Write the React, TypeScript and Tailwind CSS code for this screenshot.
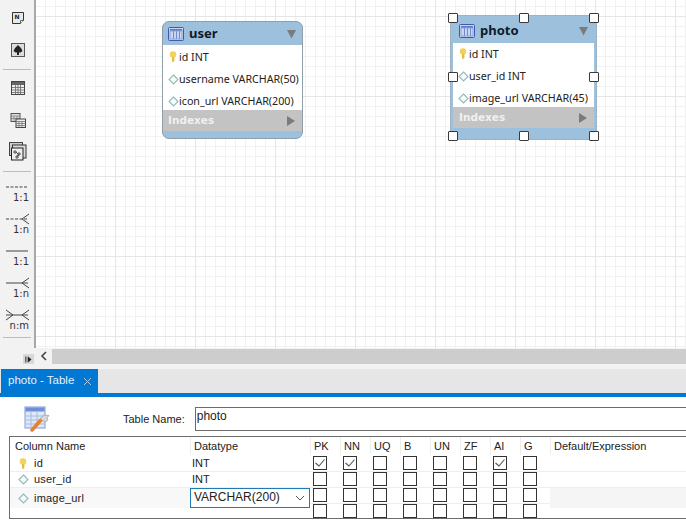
import React from "react";

const ui = { fontFamily: '"Liberation Sans", Arial, sans-serif' };
const node = { fontFamily: '"Noto Sans", "Open Sans", sans-serif' };
const erd = { fontFamily: '"DejaVu Sans", "Noto Sans", sans-serif' };

function TableGlyph() {
  return (
    <svg width="16" height="16" viewBox="0 0 16 16">
      <rect x="0.5" y="1.5" width="15" height="13" rx="1" fill="#c9d6ee" stroke="#3e5aa8" />
      <rect x="2" y="3" width="12" height="2" fill="#5f7cc6" />
      <path d="M5.5 5v8M8.5 5v8M11.5 5v8" stroke="#6f8bd0" />
      <rect x="2" y="5" width="12" height="8" fill="none" stroke="#8ea5da" />
    </svg>
  );
}

function Key() {
  return (
    <svg width="8" height="12" viewBox="0 0 8 12">
      <ellipse cx="4" cy="3.5" rx="3.3" ry="3.2" fill="#f1d25a" />
      <path d="M3 6h2.4v3.5L4 11.5 3 10z" fill="#e5bf3c" />
    </svg>
  );
}

function Diamond() {
  return (
    <svg width="11" height="11" viewBox="0 0 11 11">
      <path d="M5.5 1l4.5 4.500-4.500 4.500L1 5.500z" fill="#f6fbfb" stroke="#93baba" strokeWidth="1.100" />
    </svg>
  );
}

function Tri({ dir, color = "#7b7b7b" }: { dir: "down" | "right"; color?: string }) {
  return (
    <svg width="11" height="10" viewBox="0 0 11 10">
      {dir === "down" ? <path d="M1 1h9L5.5 9.5z" fill={color} /> : <path d="M2 0l8 5-8 5z" fill={color} />}
    </svg>
  );
}

function Handle({ className }: { className: string }) {
  return <div className={`absolute h-[10px] w-[10px] rounded-[1px] border-[1.5px] border-[#3a3a3a] bg-white ${className}`} />;
}

function Entity({
  name,
  rows,
  className,
  selected,
}: {
  name: string;
  rows: { pk?: boolean; text: string }[];
  className: string;
  selected?: boolean;
}) {
  return (
    <div className={`absolute flex w-[141px] flex-col bg-[#9dc1dc] ${selected ? "shadow-[0_0_0_2px_#9dc1dc,0_0_0_3px_#9fb4c2]" : "overflow-hidden rounded-[7px] border border-[#8f9ea9]"} ${className}`}>
      <div className={`flex items-center pr-[5px] pt-[1px] ${selected ? "h-[25px] pl-[6px]" : "h-[23px] pl-[5px]"}`}>
        <TableGlyph />
        <span className="ml-[5px] flex-1 text-[13px] font-bold text-[#0d1a2a]" style={node}>{name}</span>
        <Tri dir="down" />
      </div>
      <div className={`flex flex-col justify-start bg-white text-[#222] ${selected ? "h-[64px]" : "h-[65px] pt-[1px]"}`} style={node}>
        {rows.map((r) => (
          <div key={r.text} className="flex h-[22px] shrink-0 items-center whitespace-nowrap pl-[4px] text-[10.7px]">
            <span className="flex w-[12px] justify-center">{r.pk ? <Key /> : <Diamond />}</span>
            <span>{r.text}</span>
          </div>
        ))}
      </div>
      <div className={`flex h-[21px] items-center justify-between bg-[#c3c3c3] pr-[6px] pt-[1px] ${selected ? "pl-[6px]" : "pl-[5px]"}`}>
        <span className="text-[10.5px] font-bold text-[#f0f0f0]" style={erd}>Indexes</span>
        <Tri dir="right" />
      </div>
      <div className={selected ? "h-[9px]" : "h-[7px]"} />
    </div>
  );
}

function Sep() {
  return <div className="mx-[3px] h-px bg-[#bdbdbd]" />;
}

function ToolBtn({ children, className = "" }: { children: React.ReactNode; className?: string }) {
  return <div className={`flex justify-center pl-px ${className}`}>{children}</div>;
}

function Rel({ label, dashed, crow, both }: { label: string; dashed?: boolean; crow?: boolean; both?: boolean }) {
  return (
    <div className="flex h-[32px] flex-col">
      <svg width="34" height="16" viewBox="0 0 34 16">
        <path d="M6 8H28" stroke="#444" strokeDasharray={dashed ? "3 1.5" : undefined} />
        {crow && <path d="M22 8L29 3M22 8L29 13" stroke="#444" fill="none" />}
        {both && <path d="M13 8L6 3M13 8L6 13" stroke="#444" fill="none" />}
      </svg>
      <span className="-mt-[3px] pr-[5px] text-right text-[10px] leading-[12px] text-[#333]" style={erd}>{label}</span>
    </div>
  );
}

function Check({ on }: { on?: boolean }) {
  return (
    <div className="flex h-[14px] w-[14px] items-center justify-center border border-[#333] bg-white">
      {on && (
        <svg width="12" height="12" viewBox="0 0 12 12">
          <path d="M1.500 6l3.500 3 5.500-6.500" fill="none" stroke="#555" strokeWidth="1.100" />
        </svg>
      )}
    </div>
  );
}

const heads = ["PK", "NN", "UQ", "B", "UN", "ZF", "AI", "G"];
const gridCols = "grid grid-cols-[180px_120px_repeat(8,30px)_1fr]";

function Row({
  icon,
  name,
  type,
  checks,
  shaded,
  editor,
  className = "h-[16px]",
}: {
  icon?: "key" | "d";
  name?: string;
  type?: string;
  checks: number[];
  shaded?: boolean;
  editor?: boolean;
  className?: string;
}) {
  return (
    <div className={`${gridCols} relative border-b border-[#eeeeee] text-[11px] leading-[15px] text-[#222] ${className}`}>
      <div className={`flex h-full items-center pl-[6px] ${shaded ? "bg-[#f8f8f8]" : ""}`}>
        <span className="flex w-[14px] justify-center">{icon === "key" ? <Key /> : icon === "d" ? <Diamond /> : null}</span>
        <span className="ml-[4px] tracking-[0.2px]">{name}</span>
      </div>
      {editor ? (
        <div className="z-10 flex h-[20px] items-center justify-between border border-[#1c7bb8] bg-white pb-px pl-[3px] pr-[3px] text-[12px]">
          <span>VARCHAR(200)</span>
          <svg width="12" height="12" viewBox="0 0 12 12"><path d="M2 4l4 4 4-4" fill="none" stroke="#555" /></svg>
        </div>
      ) : (
        <div className="pl-[2px]">{type}</div>
      )}
      {heads.map((h, i) => (
        <div key={h} className="pl-[3px]">
          <Check on={checks.includes(i)} />
        </div>
      ))}
      <div className={shaded ? "h-full bg-[#f5f5f5]" : ""} />
    </div>
  );
}

export default function App() {
  return (
    <div className="flex h-[530px] w-[686px] flex-col overflow-hidden bg-white" style={ui}>
      {/* workspace */}
      <div className="flex h-[348px] shrink-0">
        <div className="flex w-[36px] shrink-0 flex-col border-r-2 border-[#a8a8a8] bg-[#f2f2f2] pt-[11px]">
          <ToolBtn className="h-[14px]">
            <svg width="14" height="14" viewBox="0 0 14 14">
              <path d="M1.5 1.5h11v8l-3 3h-8z" fill="#e8e8e8" stroke="#333" />
              <path d="M9.5 12.5v-3h3" fill="#fff" stroke="#666" />
              <text x="3.5" y="7.5" fontSize="6" fontWeight="700" fill="#222" fontFamily="DejaVu Sans">N</text>
            </svg>
          </ToolBtn>
          <ToolBtn className="mt-[18px] h-[14px]">
            <svg width="14" height="14" viewBox="0 0 14 14">
              <rect x="0.5" y="0.5" width="13" height="13" fill="#ddd" stroke="#555" />
              <path d="M7 2l3 3 1.5 3-2 1.5H8V12H6V9.500H4.500L2.500 8 4 5z" fill="#222" />
            </svg>
          </ToolBtn>
          <div className="mt-[12px]"><Sep /></div>
          <ToolBtn className="mt-[11px] h-[14px]">
            <svg width="14" height="14" viewBox="0 0 14 14">
              <rect x="0.5" y="0.5" width="13" height="13" fill="#eee" stroke="#444" />
              <rect x="1" y="1" width="12" height="3" fill="#666" />
              <path d="M1 6.500h12M1 9h12M1 11.500h12M4.500 4v9M7 4v9M9.500 4v9" stroke="#666" strokeWidth="0.8" />
            </svg>
          </ToolBtn>
          <ToolBtn className="mt-[18px] h-[15px]">
            <svg width="16" height="15" viewBox="0 0 16 15">
              <rect x="1" y="0.500" width="9" height="8" fill="#ddd" stroke="#555" />
              <path d="M1 3h9M1 5.500h9M4 3v5M7 3v5" stroke="#777" strokeWidth="0.7" />
              <rect x="6" y="6" width="9.500" height="8.500" fill="#eee" stroke="#444" />
              <path d="M6 8.500h9.500M6 10.500h9.500M6 12.500h9.500M9 8v6M12 8v6" stroke="#666" strokeWidth="0.7" />
            </svg>
          </ToolBtn>
          <ToolBtn className="mt-[14px] h-[19px]">
            <svg width="18" height="19" viewBox="0 0 18 19">
              <rect x="0.500" y="0.500" width="13" height="13" fill="#ccc" stroke="#444" />
              <rect x="3.500" y="3" width="13.500" height="13" fill="#ddd" stroke="#333" />
              <rect x="2.500" y="6" width="11.500" height="12" fill="#eee" stroke="#222" />
              <path d="M5 9h2v2H5zM9 11h2v2H9zM7 14h2v2H7zM7 10l2 2M10 13l-2 1" fill="none" stroke="#333" strokeWidth="0.8" />
            </svg>
          </ToolBtn>
          <div className="mt-[10px]"><Sep /></div>
          <div className="mt-[7px]">
            <Rel label="1:1" dashed />
            <Rel label="1:n" dashed crow />
            <Rel label="1:1" />
            <Rel label="1:n" crow />
            <Rel label="n:m" crow both />
          </div>
          <div className="-mt-[2px]"><Sep /></div>
        </div>
        <div className="relative flex-1 overflow-hidden bg-white bg-[linear-gradient(#e6e6e6_1px,transparent_1px),linear-gradient(90deg,#e6e6e6_1px,transparent_1px),linear-gradient(#f1f1f1_1px,transparent_1px),linear-gradient(90deg,#f1f1f1_1px,transparent_1px)] bg-[size:80px_80px,80px_80px,10px_10px,10px_10px] bg-[position:79px_16px,79px_16px,9px_6px,9px_6px]">
          <Entity
            name="user"
            className="left-[126px] top-[21px]"
            rows={[
              { pk: true, text: "id INT" },
              { text: "username VARCHAR(50)" },
              { text: "icon_url VARCHAR(200)" },
            ]}
          />
          <Entity
            name="photo"
            selected
            className="left-[417px] top-[18px]"
            rows={[
              { pk: true, text: "id INT" },
              { text: "user_id INT" },
              { text: "image_url VARCHAR(45)" },
            ]}
          />
          <Handle className="left-[412px] top-[13px]" />
          <Handle className="left-[483px] top-[13px]" />
          <Handle className="left-[553px] top-[13px]" />
          <Handle className="left-[412px] top-[72px]" />
          <Handle className="left-[553px] top-[72px]" />
          <Handle className="left-[412px] top-[131px]" />
          <Handle className="left-[483px] top-[131px]" />
          <Handle className="left-[553px] top-[131px]" />
        </div>
      </div>

      {/* scrollbar row */}
      <div className="flex h-[16px] shrink-0 items-stretch bg-[#f2f2f2]">
        <div className="flex w-[36px] items-end justify-end pr-[2px]">
          <div className="flex h-[10px] w-[11px] items-center justify-center bg-[#d8d8d8]">
            <svg width="7" height="7" viewBox="0 0 7 7"><path d="M0.500 0.500v6M2 0.500v6" stroke="#333" strokeWidth="0.7" /><path d="M3 0.500l3.500 3-3.500 3z" fill="#222" /></svg>
          </div>
        </div>
        <div className="flex w-[16px] items-center justify-center">
          <svg width="8" height="10" viewBox="0 0 8 10"><path d="M6 1L2 5l4 4" fill="none" stroke="#444" strokeWidth="1.600" /></svg>
        </div>
        <div className="mt-px flex-1 bg-[#cdcdcd]" />
      </div>
      <div className="h-[5px] shrink-0 bg-[#f2f2f2]" />

      {/* tab strip */}
      <div className="flex h-[24px] shrink-0 bg-[#e6e6e6] pl-[1px]">
        <div className="flex w-[97px] items-center whitespace-nowrap bg-[#0078d4] pl-[7px] text-[11.5px] text-[#e8f2fb]">
          <span>photo - Table</span>
          <svg className="ml-[9px]" width="9" height="9" viewBox="0 0 9 9"><path d="M1 1l7 7M8 1L1 8" stroke="#a9d1ef" /></svg>
        </div>
      </div>
      <div className="h-[4px] shrink-0 bg-[#0078d4]" />

      {/* editor */}
      <div className="flex flex-1 flex-col bg-white pl-[1px]">
        <div className="flex h-[39px] shrink-0 items-start">
          <svg className="ml-[23px] mt-[9px]" width="27" height="26" viewBox="0 0 27 26">
            <rect x="1" y="1" width="20" height="21" fill="#dfe8f7" stroke="#7d9bd6" />
            <rect x="1.500" y="1.500" width="19" height="4" fill="#6f90d8" />
            <path d="M7 6v15M13 6v15M2 10h18M2 14h18M2 18h18" stroke="#a3bbe6" />
            <path d="M8 24l9-10" stroke="#e5822a" strokeWidth="3.500" strokeLinecap="round" />
            <path d="M16 13l4-4 5 .5-2 2.500 1 2-3 2z" fill="#d9d9d9" stroke="#999" strokeWidth="0.700" />
          </svg>
          <span className="ml-[72px] mt-[15px] text-[11px] leading-[14px] text-[#222]">Table Name:</span>
          <div className="ml-[10px] mt-[10px] h-[24px] flex-1 border-y border-l border-[#6b6b6b] pl-[1px] text-[12px] leading-[17px] text-[#222]">photo</div>
        </div>
        <div className="ml-[8px] h-[83px] shrink-0 border-y border-l border-[#6b6b6b]">
          <div className={`${gridCols} h-[19px] text-[11px] leading-[18px] text-[#222]`}>
            <div className="pl-[5px]">Column Name</div>
            {["Datatype", ...heads, "Default/Expression"].map((h) => (
              <div key={h} className="h-[18px] border-l border-[#eeeeee] pl-[3px]">{h}</div>
            ))}
          </div>
          <Row icon="key" name="id" type="INT" checks={[0, 1, 6]} />
          <Row icon="d" name="user_id" type="INT" checks={[]} />
          <Row icon="d" name="image_url" checks={[]} shaded editor />
          <Row checks={[]} className="h-[14px] border-b-0" />
        </div>
      </div>
    </div>
  );
}
